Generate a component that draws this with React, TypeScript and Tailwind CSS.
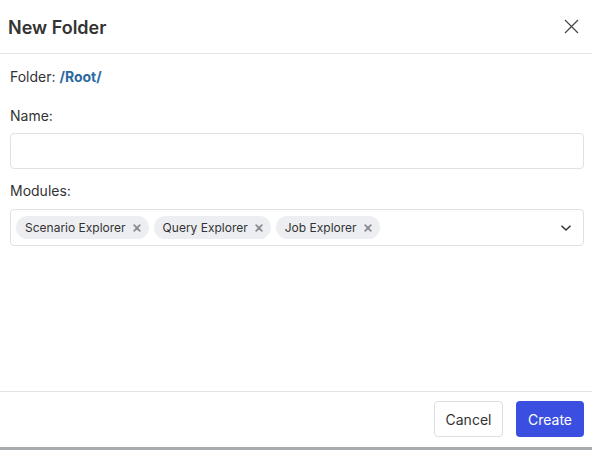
import React from "react";

const font = { fontFamily: "Inter, 'Noto Sans', sans-serif" };

function Chip({ label }: { label: string }) {
  return (
    <span className="flex h-[23px] items-center gap-[7px] rounded-full bg-[#eceef1] pl-[9px] pr-[8px] text-[12px] text-[#333]">
      {label}
      <svg width="8" height="8" viewBox="0 0 8 8" className="mt-[1px]">
        <path d="M1.2 1.2L6.8 6.8M6.8 1.2L1.2 6.8" stroke="#8a8d91" strokeWidth="1.8" strokeLinecap="round" />
      </svg>
    </span>
  );
}

export default function App() {
  return (
    <div className="flex h-[450px] w-[592px] flex-col bg-white text-[#333]" style={font}>
      <div className="flex h-[54px] shrink-0 items-center justify-between border-b border-[#e3e4e6] pl-[8px] pr-[13px]">
        <h1 className="mt-[1px] text-[18px] font-semibold text-[#333]">New Folder</h1>
        <svg width="15" height="15" viewBox="0 0 15 15">
          <path d="M1 1L14 14M14 1L1 14" stroke="#444" strokeWidth="1.2" />
        </svg>
      </div>
      <div className="flex flex-1 flex-col pl-[10px] pr-[8px] pt-[13px]">
        <div className="text-[14px] leading-[20px]">
          Folder: <span className="font-bold text-[#2b6aa1]">/Root/</span>
        </div>
        <div className="mt-[19px] text-[14px] leading-[20px]">Name:</div>
        <div className="mt-[7px] h-[36px] rounded-[4px] border border-[#dfe1e4]" />
        <div className="mt-[12px] text-[14px] leading-[20px]">Modules:</div>
        <div className="mt-[8px] flex h-[37px] items-center justify-between rounded-[4px] border border-[#dfe1e4] pl-[5px] pr-[11px]">
          <div className="flex items-center gap-[5px]">
            <Chip label="Scenario Explorer" />
            <Chip label="Query Explorer" />
            <Chip label="Job Explorer" />
          </div>
          <svg width="12" height="8" viewBox="0 0 12 8">
            <path d="M1.5 1.8L6 6L10.5 1.8" fill="none" stroke="#333" strokeWidth="1.5" />
          </svg>
        </div>
      </div>
      <div className="flex h-[56px] shrink-0 items-start justify-end gap-[13px] border-t border-[#e3e4e6] pr-[8px] pt-[9px]">
        <button className="h-[36px] w-[69px] rounded-[4px] border border-[#dcdee1] bg-white text-[14px] text-[#333]">
          Cancel
        </button>
        <button className="h-[36px] w-[68px] rounded-[4px] bg-[#3a4fe0] text-[14px] text-white">
          Create
        </button>
      </div>
      <div className="h-[3px] shrink-0 bg-[#a7abae]" />
    </div>
  );
}
